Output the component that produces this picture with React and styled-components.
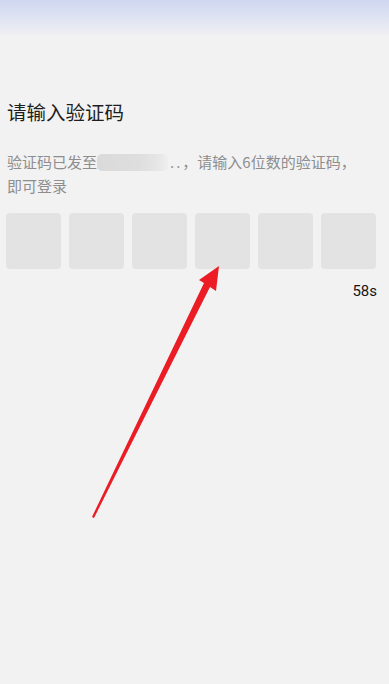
import styled, { createGlobalStyle } from "styled-components";

const GlobalStyle = createGlobalStyle`
  html, body {
    margin: 0;
    padding: 0;
    background: #f2f2f2;
    font-family: "Noto Sans CJK SC", "Noto Sans", Roboto, sans-serif;
  }
`;

const Page = styled.div`
  position: relative;
  width: 389px;
  height: 684px;
  overflow: hidden;
  background: #f2f2f2;
`;

const TopBar = styled.div`
  height: 36px;
  background: linear-gradient(to bottom, #cfd7f1 0%, #dde2f2 45%, #f1f1f3 100%);
`;

const Content = styled.div`
  padding: 0 12px 0 6px;
`;

const Title = styled.h1`
  margin: 62px 0 0 1px;
  font-size: 19.5px;
  line-height: 28px;
  font-weight: 400;
  color: #1e1e1e;
`;

const Hint = styled.p`
  margin: 24px 0 0 1px;
  font-size: 15px;
  line-height: 24px;
  color: #8e8e8e;
  width: 360px;
`;

const Masked = styled.span`
  display: inline-block;
  vertical-align: -3px;
  width: 71px;
  height: 17px;
  border-radius: 5px;
  background: linear-gradient(
    to right,
    #dadada 0%,
    #dcdcdc 30%,
    #dedede 60%,
    #e6e6e6 85%,
    #efefef 100%
  );
`;

const Dots = styled.span`
  letter-spacing: 2px;
  margin-left: 2px;
  color: #9a9a9a;
`;

const Codes = styled.div`
  display: grid;
  grid-template-columns: repeat(6, 55px);
  gap: 8px;
  margin-top: 15px;
`;

const CodeBox = styled.div`
  height: 56px;
  border-radius: 4px;
  background: #e3e3e3;
`;

const Timer = styled.div`
  margin-top: 13px;
  text-align: right;
  font-family: Roboto, "Noto Sans", sans-serif;
  font-size: 15px;
  color: #151515;
`;

const ArrowLayer = styled.svg`
  position: absolute;
  left: 0;
  top: 0;
  pointer-events: none;
`;

const Arrow = () => (
  <ArrowLayer width="389" height="684" viewBox="0 0 389 684">
    <polygon
      fill="#eb1c24"
      points="219,266 216,291 210,287 94,518 92,517 204,283 199,280"
    />
  </ArrowLayer>
);

export default function App() {
  return (
    <Page>
      <GlobalStyle />
      <TopBar />
      <Content>
        <Title>请输入验证码</Title>
        <Hint>
          验证码已发至<Masked />
          <Dots>..</Dots>，请输入6位数的验证码，即可登录
        </Hint>
        <Codes>
          {[0, 1, 2, 3, 4, 5].map((i) => (
            <CodeBox key={i} />
          ))}
        </Codes>
        <Timer>58s</Timer>
      </Content>
      <Arrow />
    </Page>
  );
}
